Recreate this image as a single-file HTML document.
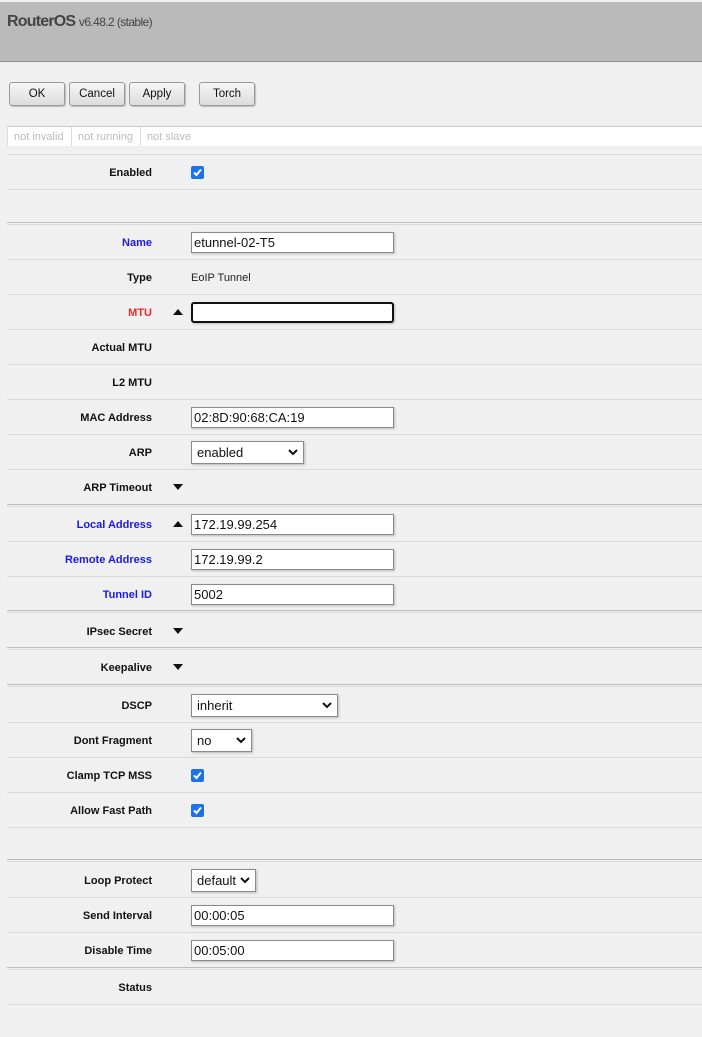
<!DOCTYPE html>
<html><head><style>
*{box-sizing:border-box;margin:0;padding:0}
body{width:702px;height:1037px;background:#f0f0f0;font-family:"Liberation Sans",sans-serif;position:relative;overflow:hidden}
.hdr{position:absolute;left:0;top:2px;width:702px;height:60px;background:#bababa;border-bottom:1px solid #8c8c8c}
.hdr .t{position:absolute;left:7px;top:11px;font-size:16px;font-weight:bold;color:#444;letter-spacing:-0.8px}
.hdr .t span{font-size:12px;font-weight:normal;letter-spacing:-0.6px}
.btn{position:absolute;top:82px;height:24px;border:1px solid #999;border-radius:3px;background:linear-gradient(#f6f6f6,#dcdcdc);font-size:11.5px;text-align:center;line-height:23px;color:#111;box-shadow:1px 1px 1px #bbb}
.sb{position:absolute;left:7px;top:126px;width:695px;height:20px;background:#fff;border-top:1px solid #c8c8c8;border-left:1px solid #ddd;font-size:11px;color:#bbb}
.sb div{position:absolute;top:0;height:19px;line-height:20px;padding-left:6px;border-right:1px solid #ddd}
.l{position:absolute;left:7px;width:695px;height:1px;background:#dadada}
.d{position:absolute;left:7px;width:695px;height:1px;background:#bdbdbd}
.lab{position:absolute;right:550px;font-size:11px;font-weight:bold;color:#111;transform:translateY(calc(-50% + 1px))}
.blue{color:#1a1ae6}.red{color:#e62a2a}
.in{position:absolute;left:191px;width:203px;height:21px;background:#fff;border:1px solid #8a8a8a;box-shadow:1px 1px 2px #bbb;font-size:13px;padding-left:2px;line-height:20px;color:#111}
.sel{position:absolute;left:191px;height:23px;background:#fff;border:1px solid #8a8a8a;box-shadow:1px 1px 2px #bbb;font-size:13px;padding-left:5px;line-height:22px;color:#111}
.sel svg{position:absolute;right:5px;top:7px}
.cb{position:absolute;left:191px;width:13px;height:13px;background:#1a73e8;border-radius:2px}
.cb svg{position:absolute;left:1px;top:1px}
.txt{position:absolute;left:191px;font-size:11px;color:#222;transform:translateY(calc(-50% + 1px))}
.up,.dn{position:absolute;left:173px;width:0;height:0;border-left:5px solid transparent;border-right:5px solid transparent}
.up{border-bottom:6px solid #111}
.dn{border-top:6px solid #111}
</style></head><body>
<div class="hdr"><div class="t">RouterOS <span>v6.48.2 (stable)</span></div></div>
<div class="btn" style="left:9px;width:56px">OK</div>
<div class="btn" style="left:69px;width:56px">Cancel</div>
<div class="btn" style="left:129px;width:56px">Apply</div>
<div class="btn" style="left:199px;width:56px">Torch</div>
<div class="sb"><div style="left:0;width:64px">not invalid</div><div style="left:64px;width:69px">not running</div><div style="left:133px;border:none">not slave</div></div>

<div class="l" style="top:154px"></div>
<div class="l" style="top:189px"></div>
<div class="d" style="top:222px"></div><div class="l" style="top:224px"></div>
<div class="l" style="top:259px"></div>
<div class="l" style="top:294px"></div>
<div class="l" style="top:329px"></div>
<div class="l" style="top:364px"></div>
<div class="l" style="top:399px"></div>
<div class="l" style="top:434px"></div>
<div class="l" style="top:469px"></div>
<div class="d" style="top:504px"></div><div class="l" style="top:506px"></div>
<div class="l" style="top:541px"></div>
<div class="l" style="top:576px"></div>
<div class="d" style="top:610px"></div><div class="l" style="top:612px"></div>
<div class="d" style="top:647px"></div><div class="l" style="top:649px"></div>
<div class="d" style="top:684px"></div><div class="l" style="top:686px"></div>
<div class="l" style="top:722px"></div>
<div class="l" style="top:757px"></div>
<div class="l" style="top:792px"></div>
<div class="l" style="top:827px"></div>
<div class="d" style="top:859px"></div><div class="l" style="top:861px"></div>
<div class="l" style="top:897px"></div>
<div class="l" style="top:932px"></div>
<div class="d" style="top:967px"></div><div class="l" style="top:969px"></div>
<div class="l" style="top:1004px"></div>

<div class="lab" style="top:172px">Enabled</div>
<div class="cb" style="top:166px"><svg width="11" height="11" viewBox="0 0 11 11"><path d="M2 5.5L4.5 8L9 2.5" stroke="#fff" stroke-width="2" fill="none"/></svg></div>

<div class="lab blue" style="top:242px">Name</div>
<div class="in" style="top:232px">etunnel-02-T5</div>
<div class="lab" style="top:277px">Type</div>
<div class="txt" style="top:277px">EoIP Tunnel</div>
<div class="lab red" style="top:312px">MTU</div>
<div class="up" style="top:309px"></div>
<div class="in" style="top:302px;border:2px solid #111;border-radius:3px"></div>
<div class="lab" style="top:347px">Actual MTU</div>
<div class="lab" style="top:382px">L2 MTU</div>
<div class="lab" style="top:417px">MAC Address</div>
<div class="in" style="top:407px">02:8D:90:68:CA:19</div>
<div class="lab" style="top:452px">ARP</div>
<div class="sel" style="top:441px;width:113px">enabled<svg width="10" height="7" viewBox="0 0 10 7"><path d="M1 1L5 5L9 1" stroke="#111" stroke-width="2" fill="none"/></svg></div>
<div class="lab" style="top:487px">ARP Timeout</div>
<div class="dn" style="top:484px"></div>
<div class="lab blue" style="top:524px">Local Address</div>
<div class="up" style="top:521px"></div>
<div class="in" style="top:514px">172.19.99.254</div>
<div class="lab blue" style="top:559px">Remote Address</div>
<div class="in" style="top:549px">172.19.99.2</div>
<div class="lab blue" style="top:594px">Tunnel ID</div>
<div class="in" style="top:584px">5002</div>
<div class="lab" style="top:631px">IPsec Secret</div>
<div class="dn" style="top:628px"></div>
<div class="lab" style="top:667px">Keepalive</div>
<div class="dn" style="top:664px"></div>
<div class="lab" style="top:705px">DSCP</div>
<div class="sel" style="top:694px;width:147px">inherit<svg width="10" height="7" viewBox="0 0 10 7"><path d="M1 1L5 5L9 1" stroke="#111" stroke-width="2" fill="none"/></svg></div>
<div class="lab" style="top:740px">Dont Fragment</div>
<div class="sel" style="top:729px;width:61px">no<svg width="10" height="7" viewBox="0 0 10 7"><path d="M1 1L5 5L9 1" stroke="#111" stroke-width="2" fill="none"/></svg></div>
<div class="lab" style="top:775px">Clamp TCP MSS</div>
<div class="cb" style="top:769px"><svg width="11" height="11" viewBox="0 0 11 11"><path d="M2 5.5L4.5 8L9 2.5" stroke="#fff" stroke-width="2" fill="none"/></svg></div>
<div class="lab" style="top:810px">Allow Fast Path</div>
<div class="cb" style="top:804px"><svg width="11" height="11" viewBox="0 0 11 11"><path d="M2 5.5L4.5 8L9 2.5" stroke="#fff" stroke-width="2" fill="none"/></svg></div>
<div class="lab" style="top:880px">Loop Protect</div>
<div class="sel" style="top:869px;width:65px">default<svg width="10" height="7" viewBox="0 0 10 7"><path d="M1 1L5 5L9 1" stroke="#111" stroke-width="2" fill="none"/></svg></div>
<div class="lab" style="top:915px">Send Interval</div>
<div class="in" style="top:905px">00:00:05</div>
<div class="lab" style="top:950px">Disable Time</div>
<div class="in" style="top:940px">00:05:00</div>
<div class="lab" style="top:987px">Status</div>
</body></html>
